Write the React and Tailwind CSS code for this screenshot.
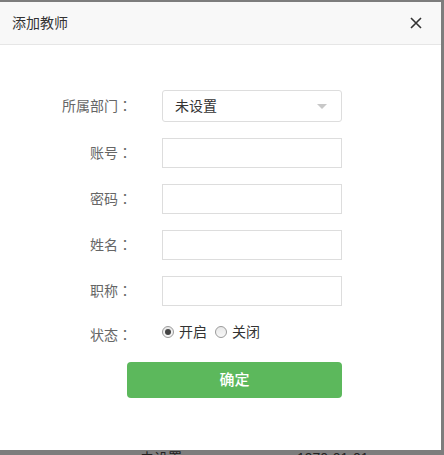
import React, { useState } from "react";

const FONT = { fontFamily: '"Liberation Sans", "Noto Sans CJK SC", sans-serif' };
const COLON = { fontFamily: '"Noto Sans CJK TC", sans-serif' };

function Label({ children, className = "" }) {
  return (
    <div className={"w-[132px] shrink-0 text-right text-[14px] text-[#666] " + className}>
      {children}
      <span style={COLON}>：</span>
    </div>
  );
}

function Radio({ checked, label, onClick }) {
  return (
    <div className="flex items-center cursor-pointer" onClick={onClick}>
      <span className="w-[12px] h-[12px] rounded-full border border-[#9a9a9a] bg-gradient-to-b from-[#e8e8e8] to-[#f7f7f7] flex items-center justify-center">
        {checked && <span className="w-[6px] h-[6px] rounded-full bg-[#444]" />}
      </span>
      <span className="ml-[5px] text-[14px] text-[#333]">{label}</span>
    </div>
  );
}

export default function App() {
  const [status, setStatus] = useState(1);

  return (
    <div className="w-[444px] h-[455px] bg-[#7d7d7d] overflow-hidden" style={FONT}>
      <div className="h-[2px]" />
      <div className="w-[441px] h-[448px] bg-white flex flex-col">
        {/* header */}
        <div className="h-[43px] bg-[#f8f8f8] border-b border-[#e6e6e6] flex items-center justify-between pl-[12px] pr-[19px]">
          <div className="text-[14px] text-[#333]">添加教师</div>
          <svg width="12" height="12" viewBox="0 0 12 12" className="cursor-pointer">
            <path d="M1 1 L11 11 M11 1 L1 11" stroke="#333" strokeWidth="1.6" />
          </svg>
        </div>

        {/* form */}
        <div className="flex flex-col gap-4 pt-[45px]">
          <div className="flex items-center">
            <Label>所属部门</Label>
            <div className="ml-[30px] w-[180px] h-[32px] border border-[#ddd] rounded-[3px] flex items-center justify-between pl-[12px] pr-[14px]">
              <span className="text-[14px] text-[#333]">未设置</span>
              <span className="w-0 h-0 border-l-[5px] border-r-[5px] border-t-[5px] border-l-transparent border-r-transparent border-t-[#c8c8c8]" />
            </div>
          </div>
          {["账号", "密码", "姓名", "职称"].map((l) => (
            <div key={l} className="flex items-center">
              <Label>{l}</Label>
              <input
                type={l === "密码" ? "password" : "text"}
                className="ml-[30px] w-[180px] h-[30px] border border-[#ddd] outline-none px-2 text-[14px]"
              />
            </div>
          ))}
          <div className="flex items-center h-[20px]">
            <Label className="pt-[6px]">状态</Label>
            <div className="ml-[30px] flex items-center gap-[8px]">
              <Radio checked={status === 1} label="开启" onClick={() => setStatus(1)} />
              <Radio checked={status === 0} label="关闭" onClick={() => setStatus(0)} />
            </div>
          </div>
          <div className="pl-[127px] pt-[4px]">
            <button className="w-[215px] h-[36px] rounded-[4px] bg-[#5cb85c] text-white text-[15px] font-medium">
              确定
            </button>
          </div>
        </div>
      </div>
      <div className="flex h-[5px] overflow-hidden text-[14px] text-[#222] leading-[16px]">
        <span className="ml-[140px]">未设置</span>
        <span className="ml-[115px]">1970-01-01</span>
      </div>
    </div>
  );
}
